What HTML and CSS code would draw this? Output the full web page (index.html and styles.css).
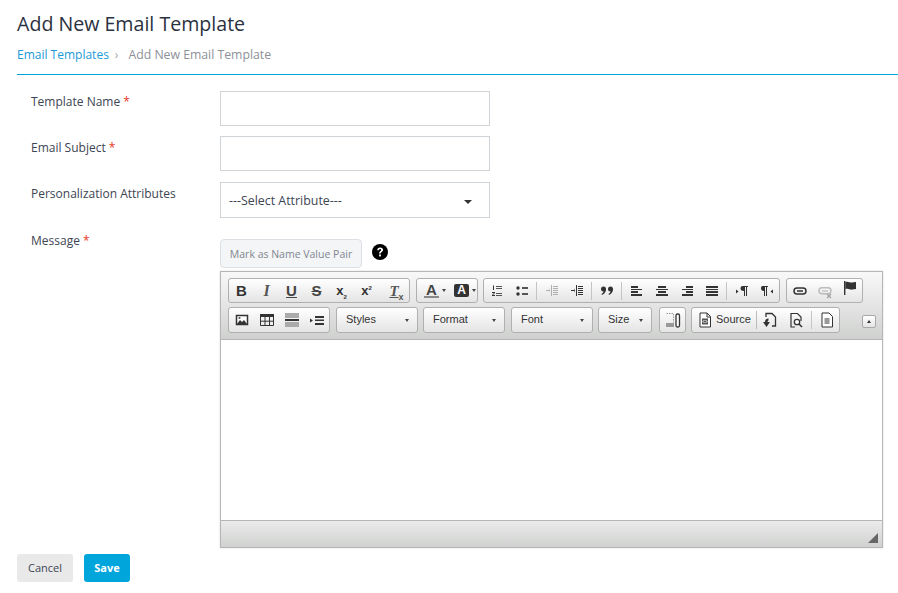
FILE: index.html
```html
<!DOCTYPE html>
<html lang="en">
<head>
<meta charset="utf-8">
<title>Add New Email Template</title>
<link rel="stylesheet" href="styles.css">
</head>
<body>
<div class="page">
  <header class="head">
    <h1>Add New Email Template</h1>
    <nav class="crumbs"><a href="#">Email Templates</a><span class="chev">›</span><span class="cur">Add New Email Template</span></nav>
  </header>
  <form class="form">
    <div class="row r1"><label>Template Name <b>*</b></label><input class="field" type="text"></div>
    <div class="row r2"><label>Email Subject <b>*</b></label><input class="field" type="text"></div>
    <div class="row r3"><label>Personalization Attributes</label><div class="select"><span>---Select Attribute---</span><i class="caret"></i></div></div>
    <div class="row r4">
      <label>Message <b>*</b></label>
      <div class="msg">
        <div class="msgtop"><button type="button" class="mark">Mark as Name Value Pair</button>
          <svg class="help" width="16" height="16" viewBox="0 0 16 16"><circle cx="8" cy="8" r="8" fill="#000"/><path d="M5.200 6.200C5.300 4.400 6.500 3.400 8.200 3.400c1.700 0 2.900 1 2.900 2.400 0 1.100-.6 1.700-1.400 2.300-.7.500-.9.800-.9 1.500H7.100c0-1.200.3-1.800 1.100-2.400.6-.5.9-.8.9-1.300 0-.6-.4-.9-1-.9-.7 0-1.100.4-1.200 1.200z" fill="#fff"/><rect x="7.100" y="10.500" width="1.800" height="1.900" fill="#fff"/></svg>
        </div>
        <div class="editor">
          <div class="toolbar">
            <div class="tbrow">
              <div class="grp">
                <span class="b"><span class="g gb">B</span></span>
                <span class="b"><span class="g gi">I</span></span>
                <span class="b"><span class="g gu">U</span></span>
                <span class="b"><span class="g gs">S</span></span>
                <span class="b"><span class="g gx">x<sub>2</sub></span></span>
                <span class="b"><span class="g gx">x<sup>2</sup></span></span>
                <span class="sp"></span>
                <span class="b"><span class="g gi gtx">T<sub>x</sub></span></span>
              </div>
              <div class="grp g6">
                <span class="b w30"><span class="g ga">A</span><i class="mini"></i></span>
                <span class="b w30"><span class="g gab">A</span><i class="mini"></i></span>
              </div>
              <div class="grp">
                <span class="b"><svg width="16" height="16" viewBox="0 0 16 16"><path d="M7 3h6v1H7zM7 5h6v1H7zM7 10h6v1H7zM7 12h6v1H7z" fill="#555"/><path d="M4 2.500h1v4.500H4zM3 9h3v1L4 12h2v1H3v-1l2-2H3z" fill="#333"/></svg></span>
                <span class="b"><svg width="16" height="16" viewBox="0 0 16 16"><circle cx="4" cy="5" r="1.700" fill="#333"/><circle cx="4" cy="11" r="1.700" fill="#333"/><path d="M8 4h6v2H8zM8 10h6v2H8z" fill="#555"/></svg></span>
                <span class="sep"></span>
                <span class="b off"><svg width="16" height="16" viewBox="0 0 16 16"><path d="M9 3h5v1H9zM9 5h5v1H9zM9 7h5v1H9zM9 9h5v1H9zM9 11h5v1H9zM7 2h1v11H7zM2 7h3V5.500L6 7.500 5 9.500V8H2z" fill="#999"/></svg></span>
                <span class="b"><svg width="16" height="16" viewBox="0 0 16 16"><path d="M9 3h5v1H9zM9 5h5v1H9zM9 7h5v1H9zM9 9h5v1H9zM9 11h5v1H9zM7 2h1v11H7zM2 7h3V5.500L6 7.500 5 9.500V8H2z" fill="#333"/></svg></span>
                <span class="sep"></span>
                <span class="b"><svg width="16" height="16" viewBox="0 0 16 16"><circle cx="4.500" cy="6" r="2.500" fill="#333"/><circle cx="11.500" cy="6" r="2.500" fill="#333"/><path d="M7 6c0 3-1.500 5-4 6l-.5-1c1.500-.8 2.200-2 2.200-4zM14 6c0 3-1.500 5-4 6l-.5-1c1.500-.8 2.200-2 2.200-4z" fill="#333"/></svg></span>
                <span class="sep"></span>
                <span class="b"><svg width="16" height="16" viewBox="0 0 16 16"><path d="M2 3h7v2H2zM2 6h11v1H2zM2 8h7v2H2zM2 11h11v2H2z" fill="#333"/></svg></span>
                <span class="b"><svg width="16" height="16" viewBox="0 0 16 16"><path d="M4 3h8v2H4zM2 6h12v1H2zM4 8h8v2H4zM2 11h12v2H2z" fill="#333"/></svg></span>
                <span class="b"><svg width="16" height="16" viewBox="0 0 16 16"><path d="M7 3h7v2H7zM3 6h11v1H3zM7 8h7v2H7zM3 11h11v2H3z" fill="#333"/></svg></span>
                <span class="b"><svg width="16" height="16" viewBox="0 0 16 16"><path d="M2 3h12v2H2zM2 6h12v1H2zM2 8h12v2H2zM2 11h12v2H2z" fill="#333"/></svg></span>
                <span class="sep"></span>
                <span class="b"><svg width="16" height="16" viewBox="0 0 16 16"><path d="M2 6.500l2.500 2-2.500 2zM8.500 3H14v1h-1v9h-1V4h-1v9h-1V8C8 8 6.500 7.200 6.500 5.500S7.500 3 8.500 3z" fill="#333"/></svg></span>
                <span class="b"><svg width="16" height="16" viewBox="0 0 16 16"><path d="M14 6.500l-2.500 2 2.500 2zM3.500 3H9v1H8v9H7V4H6v9H5V8C3.500 8 2 7.200 2 5.500S2.500 3 3.500 3z" fill="#333"/></svg></span>
              </div>
              <div class="grp g6">
                <span class="b"><svg width="16" height="16" viewBox="0 0 16 16"><rect x="2" y="5" width="12" height="6" rx="3" fill="none" stroke="#333" stroke-width="1.500"/><path d="M5 8h6" stroke="#333" stroke-width="1.500"/></svg></span>
                <span class="b off"><svg width="16" height="16" viewBox="0 0 16 16"><rect x="2" y="4.800" width="12" height="6" rx="3" fill="none" stroke="#aaa" stroke-width="1.400"/><path d="M5 8h6" stroke="#aaa" stroke-width="1.200"/><path d="M10 11l4 4M14 11l-4 4" stroke="#888" stroke-width="1.200"/></svg></span>
                <span class="b up"><svg width="16" height="16" viewBox="0 0 16 16"><path d="M2 1h1.400v14H2z" fill="#333"/><path d="M3.400 2c3-1 4.500 1 7 .5 1-.2 2.200-.6 3.600-.5v7c-1.400 0-2.600.4-3.600.6-2.500.4-4-1.600-7-.6z" fill="#333"/></svg></span>
              </div>
            </div>
            <div class="tbrow t2">
              <div class="grp">
                <span class="b"><svg width="16" height="16" viewBox="0 0 16 16"><rect x="2.500" y="3.500" width="11" height="9" fill="#fff" stroke="#333" stroke-width="1.500"/><path d="M3 12l3-4 2 2 2-2 3 4z" fill="#333"/><circle cx="5.500" cy="6" r="1.100" fill="#555"/></svg></span>
                <span class="b"><svg width="16" height="16" viewBox="0 0 16 16"><path d="M1 2h14v3H1z" fill="#333"/><path d="M1.500 5v8.500h13V5M6 5v8.500M10.500 5v8.500M1.500 9.200h13" fill="none" stroke="#333"/></svg></span>
                <span class="b"><svg width="16" height="16" viewBox="0 0 16 16"><path d="M1 1h14v5H1z" fill="#aaa"/><path d="M1 7h14v2H1z" fill="#333"/><path d="M1 10h14v5H1z" fill="#aaa"/></svg></span>
                <span class="b"><svg width="16" height="16" viewBox="0 0 16 16"><path d="M1 6.500l3 2-3 2zM6 4h9v2H6zM6 7.500h9v1.500H6zM6 11h9v2H6z" fill="#333"/></svg></span>
              </div>
              <div class="combo g6"><span>Styles</span><i class="mini"></i></div>
              <div class="combo"><span>Format</span><i class="mini"></i></div>
              <div class="combo g6"><span>Font</span><i class="mini"></i></div>
              <div class="combo size"><span>Size</span><i class="mini"></i></div>
              <div class="grp g7">
                <span class="b"><svg width="16" height="18" viewBox="0 0 16 18"><path d="M1.500 2.500h7v9" fill="none" stroke="#999" stroke-dasharray="1.500 1"/><rect x="1" y="12" width="8" height="4" fill="#999"/><rect x="11" y="3" width="3.500" height="13" rx="1.500" fill="#fff" stroke="#333" stroke-width="1.300"/></svg></span>
              </div>
              <div class="grp">
                <span class="b src"><svg width="14" height="16" viewBox="0 0 14 16"><path d="M2 1h7l3.500 3.500V15H2z" fill="#fff" stroke="#333"/><path d="M9 1v4h3.500" fill="none" stroke="#333"/><rect x="4" y="6.500" width="6" height="6" fill="#555"/><path d="M6.500 8L5 9.500 6.500 11M7.500 8L9 9.500 7.500 11" fill="none" stroke="#fff"/></svg><span class="srct">Source</span></span>
                <span class="line"></span>
                <span class="b w26"><svg width="16" height="17" viewBox="0 0 16 17"><path d="M4 5V1.500h6l3.500 3.500v9H10" fill="none" stroke="#333" stroke-width="1.300"/><path d="M6.500 6.500A3.500 3.500 0 0 0 3 10H1l3.500 5L8 10H5.500a2 2 0 0 1 1-1.500z" fill="#333"/></svg></span>
                <span class="b w26"><svg width="16" height="17" viewBox="0 0 16 17"><path d="M7 15H3V1.500h6.500L13 5v4" fill="none" stroke="#333" stroke-width="1.200"/><circle cx="9" cy="10" r="2.700" fill="#fff" stroke="#333" stroke-width="1.300"/><path d="M11 12l3 3" stroke="#333" stroke-width="1.600"/></svg></span>
                <span class="sep"></span>
                <span class="b"><svg width="14" height="16" viewBox="0 0 14 16"><path d="M2 1h7l3.500 3.500V15H2z" fill="#fff" stroke="#333"/><path d="M4.500 7h5M4.500 9h5M4.500 11h5" stroke="#333"/></svg></span>
              </div>
              <span class="collapser"><i class="upcaret"></i></span>
            </div>
          </div>
          <div class="content"></div>
          <div class="bottom"><svg class="grip" width="11" height="11" viewBox="0 0 11 11"><path d="M10 1v10H0z" fill="#666"/></svg></div>
        </div>
      </div>
    </div>
    <div class="actions"><button type="button" class="btn cancel">Cancel</button><button type="button" class="btn save">Save</button></div>
  </form>
</div>
</body>
</html>
```

FILE: styles.css
```css
* { box-sizing: border-box; }
html, body { margin: 0; padding: 0; background: #fff; }
body { font-family: "Open Sans", "Noto Sans", sans-serif; color: #3c4553; font-size: 12px; }
.page { padding-left: 17px; height: 593px; overflow: hidden; }
.head { height: 75px; border-bottom: 1px solid #00a5dc; padding-top: 10px; }
h1 { margin: 0; font-size: 19.600px; line-height: 28px; font-weight: 400; color: #2a3140; }
.crumbs { margin-top: 8px; font-size: 12px; line-height: 18px; color: #8c9198; display: flex; }
.crumbs a { color: #1c9ad6; text-decoration: none; }
.chev { margin: 0 10px 0 6px; color: #a5a9ae; }
.cur { font-size: 12.250px; }
.form { padding-top: 16px; }
.row { display: flex; padding-left: 14px; }
.row label { width: 189px; flex: none; line-height: 20px; color: #3c4553; margin-top: 1px; }
.row label b { color: #e8351f; font-weight: 400; }
.r2 { margin-top: 10px; }
.r3 { margin-top: 11px; }
.r4 { margin-top: 11px; }
.r2 label, .r3 label, .r4 label { margin-top: 2px; }
.field { width: 270px; height: 35px; border: 1px solid #cfd4d8; background: #fff; padding: 0 8px; outline: none; }
.select { width: 270px; height: 36px; border: 1px solid #cfd4d8; display: flex; align-items: center; justify-content: space-between; padding: 0 17px 0 8px; font-size: 12.400px; color: #3c4553; }
.caret { width: 0; height: 0; border: 4px solid transparent; border-top-color: #333; border-bottom: 0; margin-top: 3px; }
.msg { width: 663px; flex: none; padding-top: 10px; }
.msgtop { display: flex; align-items: flex-start; height: 32px; }
.mark { width: 142px; height: 29px; border: 1px solid #dcdfe3; border-radius: 4px; background: #f4f5f7; color: #7f8790; font: 10.500px "Open Sans", sans-serif; padding: 0; }
.help { margin: 5px 0 0 10px; }
.editor { width: 663px; height: 277px; border: 1px solid #b6b6b6; display: flex; flex-direction: column; box-shadow: 0 0 2px rgba(0,0,0,.15); }
.toolbar { height: 68px; padding: 6px 0 0 7px; background: linear-gradient(#f8f8f8, #cfd1cf); border-bottom: 1px solid #b6b6b6; flex: none; }
.tbrow { display: flex; gap: 5px; height: 25px; }
.t2 { margin-top: 4px; height: 26px; }
.grp { display: flex; align-items: center; height: 100%; border: 1px solid #b0b0b0; border-radius: 3px; background: linear-gradient(#fff, #e4e4e4); }
.g6 { margin-left: 1px; }
.g7 { margin-left: 2px; }
.b { width: 25px; height: 100%; display: flex; align-items: center; justify-content: center; flex: none; }
.w30 { width: 30px; justify-content: flex-start; padding-left: 7px; gap: 3px; }
.w26 { width: 26px; }
.sp { width: 5px; flex: none; }
.sep { width: 5px; height: 18px; flex: none; background: linear-gradient(#c4c4c4, #c4c4c4) center / 1px 100% no-repeat; }
.line { width: 1px; height: 18px; background: #bbb; flex: none; }
.off svg { opacity: .75; }
.up svg { margin-top: -5px; }
.g { font-family: "Liberation Sans", sans-serif; font-size: 14px; line-height: 16px; color: #333; font-weight: 700; }
.gb { font-size: 15px; }
.gi { font-family: "Liberation Serif", serif; font-style: italic; font-size: 16px; color: #555; }
.gu { text-decoration: underline; font-size: 15px; color: #444; }
.gs { text-decoration: line-through; font-size: 15px; color: #444; }
.gx { font-size: 13px; }
.g sub, .g sup { font-size: 6px; line-height: 0; }
.gtx { font-size: 15px; text-decoration: underline; }
.gtx sub { font-family: "Liberation Sans", sans-serif; font-size: 9px; font-style: normal; text-decoration: none; }
.ga { border-bottom: 2px solid #888; line-height: 13px; font-size: 15px; padding: 0 2px; color: #444; }
.gab { background: #333; color: #fff; border-radius: 2px; width: 15px; height: 13px; line-height: 13px; text-align: center; font-size: 12px; }
.mini { width: 0; height: 0; border: 2px solid transparent; border-top: 3px solid #444; border-bottom: 0; flex: none; }
.combo { width: 82px; height: 100%; border: 1px solid #b0b0b0; border-radius: 3px; background: linear-gradient(#fff, #e4e4e4); display: flex; align-items: center; justify-content: space-between; padding: 0 8px 0 9px; font: 11px/16px "Liberation Sans", sans-serif; color: #333; }
.combo span { margin-top: -2px; }
.size { width: 54px; }
.src { width: 64px; justify-content: flex-start; padding-left: 6px; gap: 4px; font: 11px/16px "Liberation Sans", sans-serif; color: #333; }
.srct { margin-top: -2px; }
.collapser { width: 14px; height: 13px; border: 1px solid #a8a8a8; border-radius: 2px; background: linear-gradient(#fff, #e4e4e4); margin: 8px 0 0 17px; display: flex; align-items: center; justify-content: center; flex: none; }
.upcaret { width: 0; height: 0; border: 2px solid transparent; border-bottom: 3px solid #333; border-top: 0; }
.content { flex: 1; background: #fff; }
.bottom { height: 27px; flex: none; background: linear-gradient(#ebebeb, #cfd1cf); border-top: 1px solid #b6b6b6; display: flex; justify-content: flex-end; align-items: flex-end; padding: 0 3px 4px 0; }
.actions { display: flex; gap: 11px; margin-top: 6px; }
.btn { height: 28px; border: 0; border-radius: 3px; font: 11px "Open Sans", sans-serif; padding: 0 0 2px; }
.cancel { width: 56px; background: #e9e9e9; color: #3c4553; }
.save { width: 46px; background: #00a5dc; color: #fff; font-weight: 700; }
```
